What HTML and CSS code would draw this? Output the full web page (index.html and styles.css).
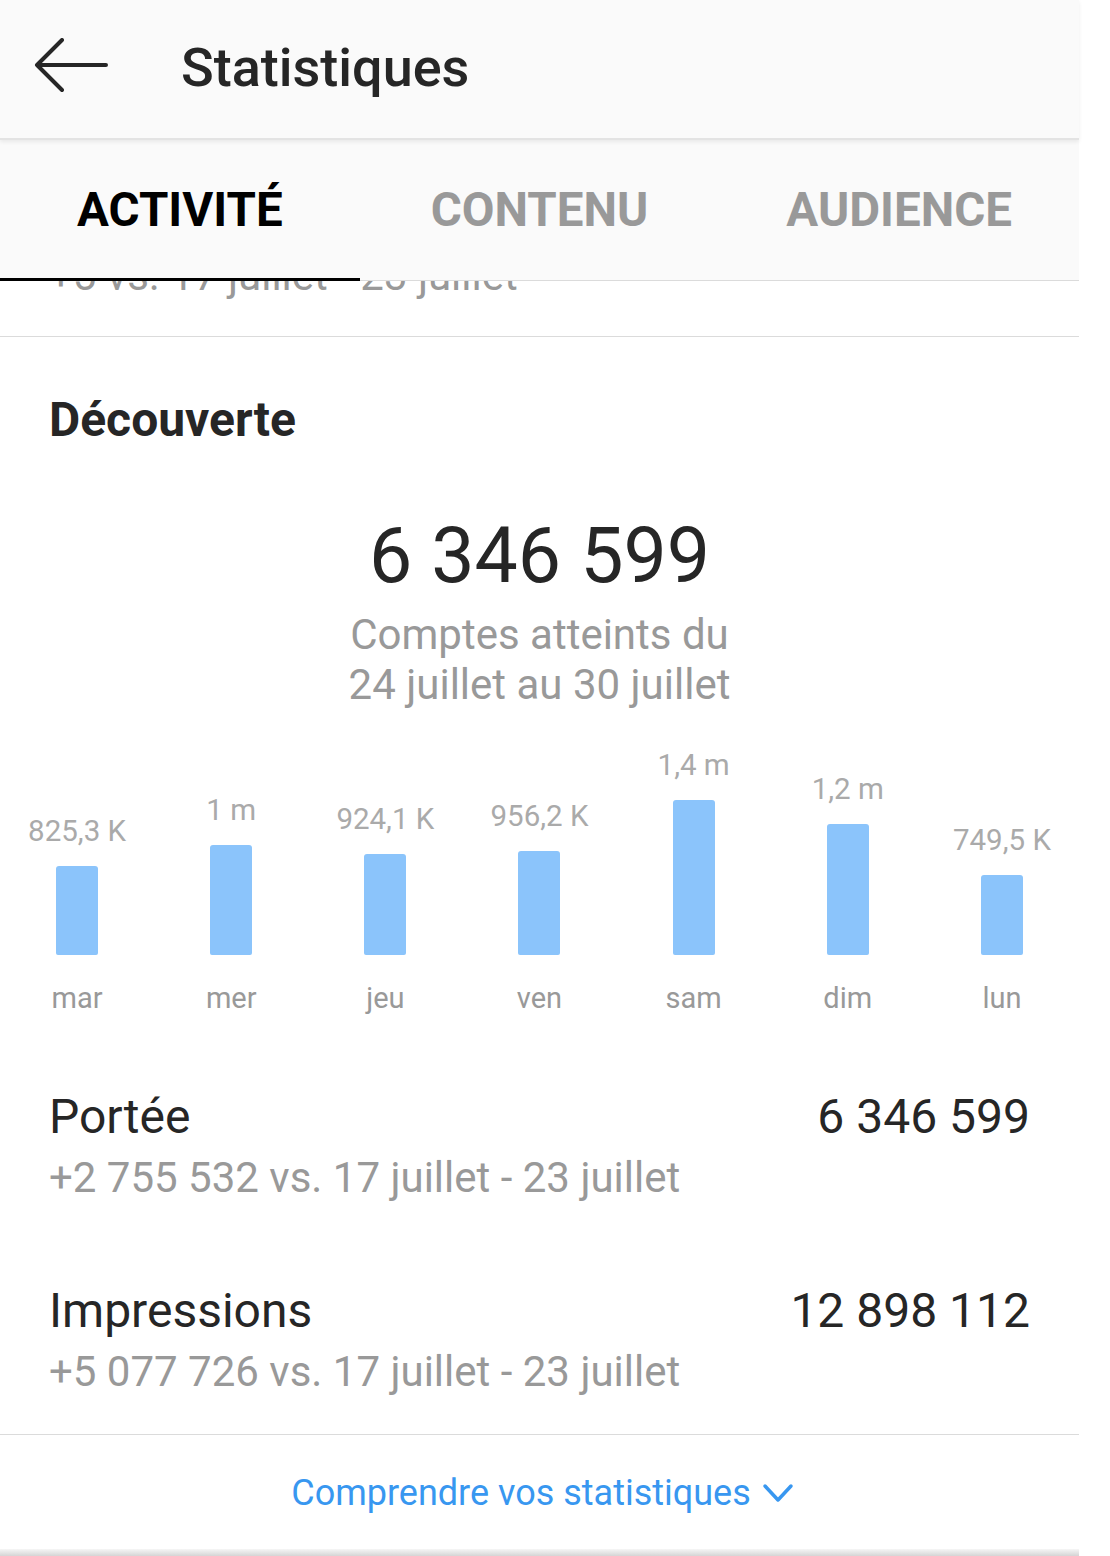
FILE: index.html
```html
<!DOCTYPE html>
<html lang="fr">

<head>
    <meta charset="UTF-8" />
    <title>Statistiques</title>

    <link rel="stylesheet" href="styles.css">
</head>

<body>
    <div id="app">
        <div id="topbar">
            <svg class="back-icon" width="76" height="56" viewBox="0 0 76 56">
                <path d="M72 27 L3 27 M28 2 L3 27 L28 52" fill="none" stroke="#262626" stroke-width="4"
                    stroke-linecap="round" stroke-linejoin="round" />
            </svg>
            <div class="title">Statistiques</div>
        </div>

        <div id="tabs">
            <div class="tab active">ACTIVITÉ</div>
            <div class="tab">CONTENU</div>
            <div class="tab">AUDIENCE</div>
        </div>

        <div id="scroll">
            <!-- row scrolled under the tab bar -->
            <div class="prev-row">
                <div class="sub">+5 vs. 17 juillet - 23 juillet</div>
            </div>

            <div class="section">
                <div class="section-title">Découverte</div>

                <div class="total">6 346 599</div>
                <div class="total-label">Comptes atteints du<br>24 juillet au 30 juillet</div>

                <div class="chart">
                    <div class="col">
                        <div class="val">825,3 K</div>
                        <div class="bar" style="height: 89px"></div>
                        <div class="day">mar</div>
                    </div>
                    <div class="col">
                        <div class="val">1 m</div>
                        <div class="bar" style="height: 110px"></div>
                        <div class="day">mer</div>
                    </div>
                    <div class="col">
                        <div class="val">924,1 K</div>
                        <div class="bar" style="height: 101px"></div>
                        <div class="day">jeu</div>
                    </div>
                    <div class="col">
                        <div class="val">956,2 K</div>
                        <div class="bar" style="height: 104px"></div>
                        <div class="day">ven</div>
                    </div>
                    <div class="col">
                        <div class="val">1,4 m</div>
                        <div class="bar" style="height: 155px"></div>
                        <div class="day">sam</div>
                    </div>
                    <div class="col">
                        <div class="val">1,2 m</div>
                        <div class="bar" style="height: 131px"></div>
                        <div class="day">dim</div>
                    </div>
                    <div class="col">
                        <div class="val">749,5 K</div>
                        <div class="bar" style="height: 80px"></div>
                        <div class="day">lun</div>
                    </div>
                </div>

                <div class="stat-row">
                    <div class="stat-line">
                        <span class="name">Portée</span>
                        <span class="value">6 346 599</span>
                    </div>
                    <div class="sub">+2 755 532 vs. 17 juillet - 23 juillet</div>
                </div>

                <div class="stat-row">
                    <div class="stat-line">
                        <span class="name">Impressions</span>
                        <span class="value">12 898 112</span>
                    </div>
                    <div class="sub">+5 077 726 vs. 17 juillet - 23 juillet</div>
                </div>
            </div>

            <div id="footer">
                <a class="more-link" href="#">
                    Comprendre vos statistiques
                    <svg width="32" height="22" viewBox="0 0 32 22">
                        <path d="M3 4 L16 18 L29 4" fill="none" stroke="#3897f0" stroke-width="3.5"
                            stroke-linecap="round" stroke-linejoin="round" />
                    </svg>
                </a>
            </div>
        </div>

        <div class="bottom-shade"></div>
    </div>
</body>

</html>
```

FILE: styles.css
```css
body {
    margin: 0;
    padding: 0;
    background: #fff;
    color: #262626;
    font-family: Roboto, "Noto Sans", sans-serif;
}

#app {
    width: 1079px;
}

/* ====== Top bar ====== */
#topbar {
    height: 138px;
    display: flex;
    align-items: center;
    background: #fafafa;
    border-bottom: 2px solid #e3e3e3;
    box-shadow: 0 2px 4px rgba(0, 0, 0, 0.07);
    position: relative;
    z-index: 1;
}

.back-icon {
    margin-left: 34px;
    margin-top: -6px;
}

.title {
    margin-left: 71px;
    font-size: 54px;
    font-weight: 500;
    color: #262626;
    margin-top: -3px;
}

/* ====== Tabs ====== */
#tabs {
    height: 140px;
    display: flex;
    background: #fafafa;
    border-bottom: 1px solid #dbdbdb;
}

.tab {
    flex: 1;
    display: flex;
    justify-content: center;
    align-items: center;
    font-size: 47.5px;
    font-weight: 700;
    color: #999;
    position: relative;
}

.tab.active {
    color: #000;
}

.tab.active::after {
    content: "";
    position: absolute;
    left: 0;
    right: 0;
    bottom: -1px;
    height: 3px;
    background: #000;
}

/* ====== Scroll content ====== */
#scroll {
    overflow: hidden;
}

.sub {
    font-size: 42px;
    line-height: 50px;
    color: #999;
}

.prev-row {
    margin-top: -30px;
    padding: 0 49px 35px;
    border-bottom: 1px solid #dbdbdb;
}

.section {
    padding: 55px 0 37px;
    border-bottom: 1px solid #dbdbdb;
}

.section-title {
    padding: 0 49px;
    font-size: 48px;
    line-height: 56px;
    font-weight: 700;
    color: #262626;
}

.total {
    margin-top: 70px;
    text-align: center;
    font-size: 77px;
    line-height: 77px;
    color: #262626;
}

.total-label {
    margin-top: 15px;
    text-align: center;
    font-size: 42px;
    line-height: 50px;
    color: #999;
}

/* ====== Chart ====== */
.chart {
    margin-top: 38px;
    display: flex;
    align-items: flex-end;
}

.col {
    flex: 1;
    display: flex;
    flex-direction: column;
    align-items: center;
}

.val {
    font-size: 29.5px;
    line-height: 34px;
    color: #aaa;
    margin-bottom: 18px;
    white-space: nowrap;
}

.bar {
    width: 42px;
    background: #8bc4fb;
    border-radius: 3px 3px 2px 2px;
}

.day {
    margin-top: 25px;
    font-size: 29px;
    line-height: 36px;
    color: #999;
}

/* ====== Stat rows ====== */
.stat-row {
    padding: 0 49px;
    margin-top: 73px;
}

.stat-row + .stat-row {
    margin-top: 80px;
}

.stat-line {
    display: flex;
    justify-content: space-between;
    font-size: 48px;
    line-height: 56px;
    color: #262626;
}

.stat-row .sub {
    margin-top: 8px;
}

/* ====== Footer ====== */
#footer {
    height: 114px;
    display: flex;
    justify-content: center;
    align-items: center;
}

.more-link {
    display: flex;
    align-items: center;
    gap: 11px;
    font-size: 36px;
    color: #3897f0;
    text-decoration: none;
    margin-left: 6px;
    margin-top: 2px;
}

.bottom-shade {
    height: 8px;
    background: linear-gradient(#f6f6f6, #d0d0d0);
}
```
